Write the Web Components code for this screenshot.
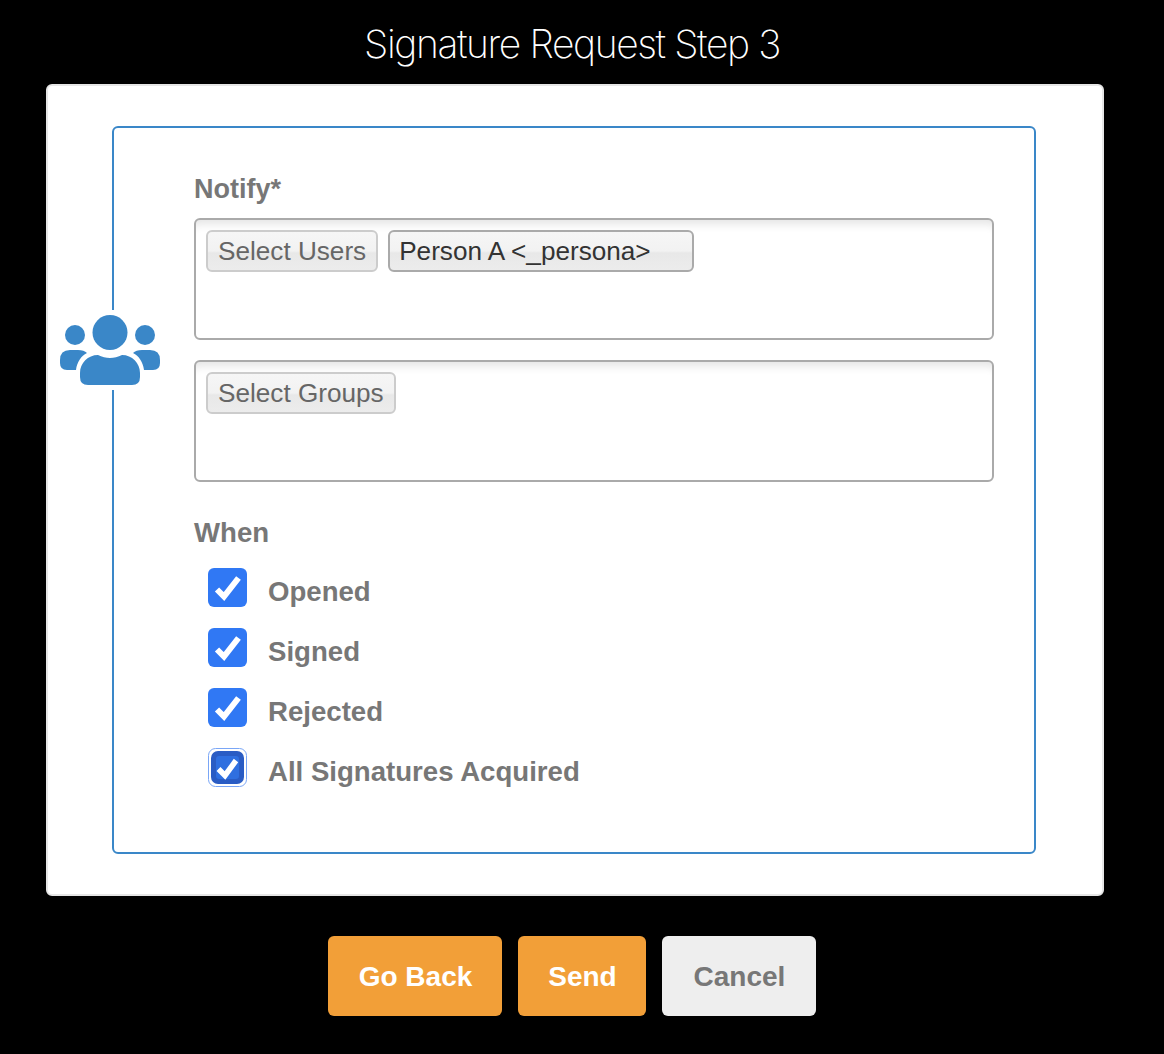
<!DOCTYPE html>
<html>
<head>
<meta charset="utf-8">
<title>Signature Request Step 3</title>
<style>
    html, body { margin: 0; background: #000; }
    body { font-family: "Liberation Sans", Arial, sans-serif; }
</style>
</head>
<body>
<request-page heading="Signature Request Step 3">
    <form-label>Notify*</form-label>
    <picker-box>
        <picker-chip muted>Select Users</picker-chip>
        <picker-chip wide>Person A &lt;_persona&gt;</picker-chip>
    </picker-box>
    <picker-box>
        <picker-chip muted>Select Groups</picker-chip>
    </picker-box>
    <form-label when>When</form-label>
    <check-row>Opened</check-row>
    <check-row>Signed</check-row>
    <check-row>Rejected</check-row>
    <check-row focused>All Signatures Acquired</check-row>
    <action-button slot="actions" kind="primary" style="width:174px">Go Back</action-button>
    <action-button slot="actions" kind="primary" style="width:128px">Send</action-button>
    <action-button slot="actions" style="width:154px">Cancel</action-button>
</request-page>

<script>
// Page shell: title, white card, blue framed panel with the people icon, buttons
class RequestPage extends HTMLElement {
    constructor() {
        super();
        this.attachShadow({ mode: 'open' });
        this.shadowRoot.innerHTML = `
            <style>
                :host { display: block; width: 1164px; height: 1054px; overflow: hidden; }
                h1 {
                    margin: 0;
                    width: 1144px;
                    height: 84px;
                    text-align: center;
                    color: #fff;
                    letter-spacing: -1.4px;
                    font: 200 39px/88px Inter, "Liberation Sans", sans-serif;
                }
                .card {
                    box-sizing: border-box;
                    width: 1058px;
                    height: 812px;
                    margin-left: 46px;
                    padding: 40px 64px;
                    background: #fff;
                    border: 2px solid #e6e6e6;
                    border-radius: 6px;
                }
                .panel {
                    position: relative;
                    box-sizing: border-box;
                    width: 924px;
                    height: 728px;
                    padding: 44px 40px 0 80px;
                    border: 2px solid #3a87c8;
                    border-radius: 6px;
                }
                .people {
                    position: absolute;
                    left: -54px;
                    top: 182px;
                    width: 102px;
                    padding: 5px 0;
                    background: #fff;
                    line-height: 0;
                }
                .people svg { display: block; }
                .actions {
                    display: flex;
                    justify-content: center;
                    gap: 16px;
                    width: 1144px;
                    margin-top: 40px;
                }
            </style>
            <h1>${this.getAttribute('heading')}</h1>
            <div class="card">
                <div class="panel">
                    <div class="people">
                        <svg width="100" height="70" viewBox="0 0 100 70" fill="#3a87c8">
                            <circle cx="50" cy="17.5" r="17.5"/>
                            <circle cx="15" cy="20" r="10"/>
                            <circle cx="85" cy="20" r="10"/>
                            <path d="M10 35H18C22 35 25 36 27 38C21 41 17 47 16 55H7Q0 55 0 48V45Q0 35 10 35Z"/>
                            <path d="M90 35H82C78 35 75 36 73 38C79 41 83 47 84 55H93Q100 55 100 48V45Q100 35 90 35Z"/>
                            <path d="M38 40C42 42 46 43 50 43C54 43 58 42 62 40C72 40 80 48 80 58V62Q80 70 72 70H28Q20 70 20 62V58C20 48 28 40 38 40Z"/>
                        </svg>
                    </div>
                    <slot></slot>
                </div>
            </div>
            <div class="actions"><slot name="actions"></slot></div>
        `;
    }
}

class FormLabel extends HTMLElement {
    constructor() {
        super();
        this.attachShadow({ mode: 'open' });
        this.shadowRoot.innerHTML = `
            <style>
                :host {
                    display: block;
                    height: 46px;
                    color: #777;
                    font: bold 27px/34px "Liberation Sans", Arial, sans-serif;
                }
                :host([when]) { margin-top: 34px; font-size: 27.6px; }
            </style>
            <slot></slot>
        `;
    }
}

class PickerBox extends HTMLElement {
    constructor() {
        super();
        this.attachShadow({ mode: 'open' });
        this.shadowRoot.innerHTML = `
            <style>
                :host {
                    display: flex;
                    align-items: flex-start;
                    gap: 10px;
                    box-sizing: border-box;
                    width: 800px;
                    height: 122px;
                    margin-bottom: 20px;
                    padding: 10px;
                    background: #fff;
                    border: 2px solid #aaa;
                    border-radius: 6px;
                    box-shadow: inset 0 12px 10px -8px #e4e4e4;
                }
                :host(:last-of-type) { margin-bottom: 0; }
            </style>
            <slot></slot>
        `;
    }
}

class PickerChip extends HTMLElement {
    constructor() {
        super();
        this.attachShadow({ mode: 'open' });
        this.shadowRoot.innerHTML = `
            <style>
                :host {
                    display: block;
                    box-sizing: border-box;
                    height: 42px;
                    padding: 0 10px;
                    border: 2px solid #aaa;
                    border-radius: 6px;
                    color: #333;
                    white-space: nowrap;
                    font: 26.15px/38px "Liberation Sans", Arial, sans-serif;
                    background: linear-gradient(#f6f6f6, #f2f2f2 50%, #e8e8e8 55%, #ececec);
                }
                :host([muted]) { border-color: #ccc; color: #666; }
                :host([wide]) { width: 306px; padding-left: 9px; }
            </style>
            <slot></slot>
        `;
    }
}

class CheckRow extends HTMLElement {
    constructor() {
        super();
        this.attachShadow({ mode: 'open' });
        const box = this.hasAttribute('focused')
            ? `<rect x="0.5" y="0.5" width="38" height="38" rx="7" fill="#fff" stroke="#7aa6f6"/>
               <rect x="3" y="3" width="33" height="33" rx="7" fill="#2a5cc4"/>
               <rect x="8" y="8" width="23" height="23" rx="3" fill="#2f6fe0"/>
               <path d="M10.5 21L17 27.5L28 12.5" fill="none" stroke="#fff" stroke-width="5.5"/>`
            : `<rect width="39" height="39" rx="6" fill="#3078f4"/>
               <path d="M9 21.5L16 28.5L30.5 10" fill="none" stroke="#fff" stroke-width="6"/>`;
        this.shadowRoot.innerHTML = `
            <style>
                :host {
                    display: flex;
                    align-items: center;
                    gap: 21px;
                    height: 60px;
                    padding-left: 14px;
                    color: #777;
                    font: bold 27.6px/34px "Liberation Sans", Arial, sans-serif;
                }
                svg { display: block; flex: none; margin-top: -10px; }
            </style>
            <svg width="39" height="39" viewBox="0 0 39 39">${box}</svg>
            <span><slot></slot></span>
        `;
    }
}

class ActionButton extends HTMLElement {
    constructor() {
        super();
        this.attachShadow({ mode: 'open' });
        this.shadowRoot.innerHTML = `
            <style>
                :host {
                    display: flex;
                    align-items: center;
                    justify-content: center;
                    box-sizing: border-box;
                    height: 80px;
                    padding: 1px 0 0 1px;
                    background: #eee;
                    border-radius: 6px;
                    color: #777;
                    font: bold 28px "Liberation Sans", Arial, sans-serif;
                }
                :host([kind="primary"]) { background: #f29f38; color: #fff; }
            </style>
            <slot></slot>
        `;
    }
}

customElements.define('request-page', RequestPage);
customElements.define('form-label', FormLabel);
customElements.define('picker-box', PickerBox);
customElements.define('picker-chip', PickerChip);
customElements.define('check-row', CheckRow);
customElements.define('action-button', ActionButton);
</script>
</body>
</html>
